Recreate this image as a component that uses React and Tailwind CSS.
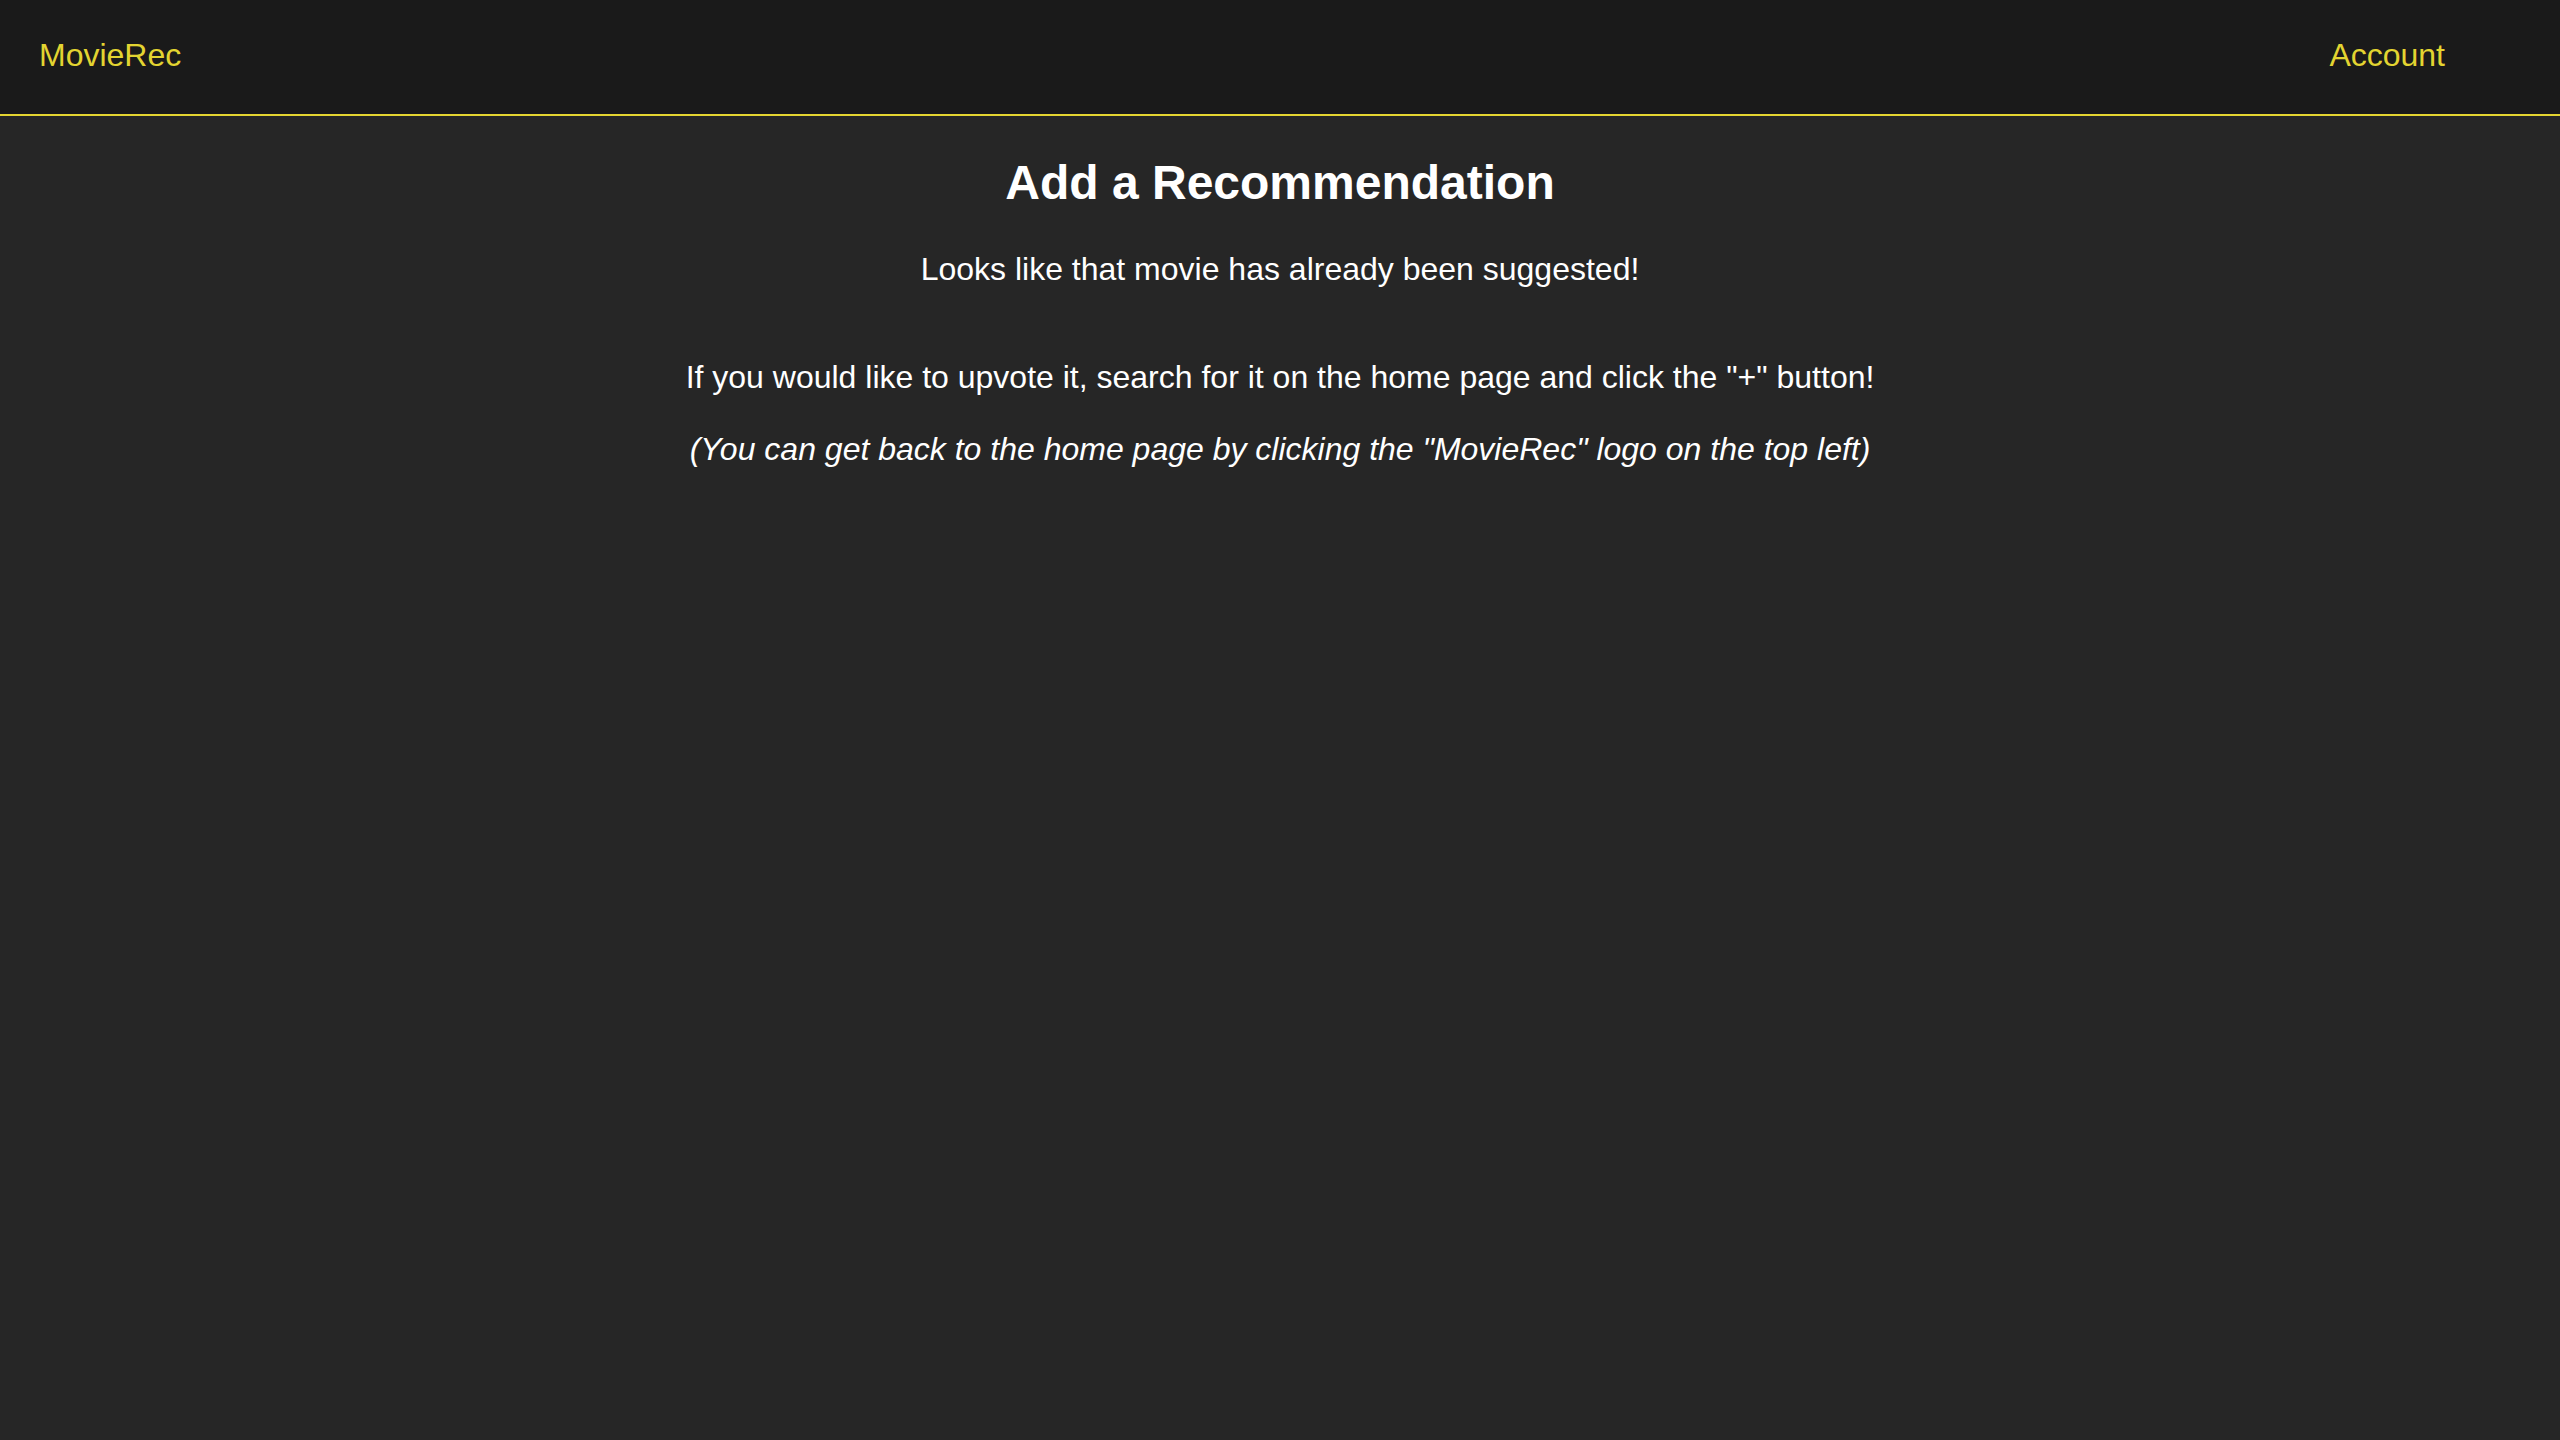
import React from 'react';

export default function App() {
  return (
    <div className="min-h-screen w-full bg-[#262626] font-['Liberation_Sans',Arial,sans-serif]">
      {/* Top bar */}
      <header className="h-[116px] bg-[#1a1a1a] border-b-2 border-[#e3d431] flex items-center justify-between pl-[39px] pr-[115px] pb-[4px]">
        <a className="text-[32px] leading-[40px] text-[#e3d431] cursor-pointer">MovieRec</a>
        <a className="text-[32px] leading-[40px] text-[#e3d431] cursor-pointer">Account</a>
      </header>

      {/* Content */}
      <main className="flex flex-col items-center text-center text-white pt-[39px]">
        <h1 className="text-[48px] leading-[56px] font-bold">Add a Recommendation</h1>
        <p className="mt-[38px] text-[32px] leading-[40px]">Looks like that movie has already been suggested!</p>
        <p className="mt-[68px] text-[32px] leading-[40px]">
          If you would like to upvote it, search for it on the home page and click the "+" button!
        </p>
        <p className="mt-[32px] text-[32px] leading-[40px] italic">
          (You can get back to the home page by clicking the "MovieRec" logo on the top left)
        </p>
      </main>
    </div>
  );
}
